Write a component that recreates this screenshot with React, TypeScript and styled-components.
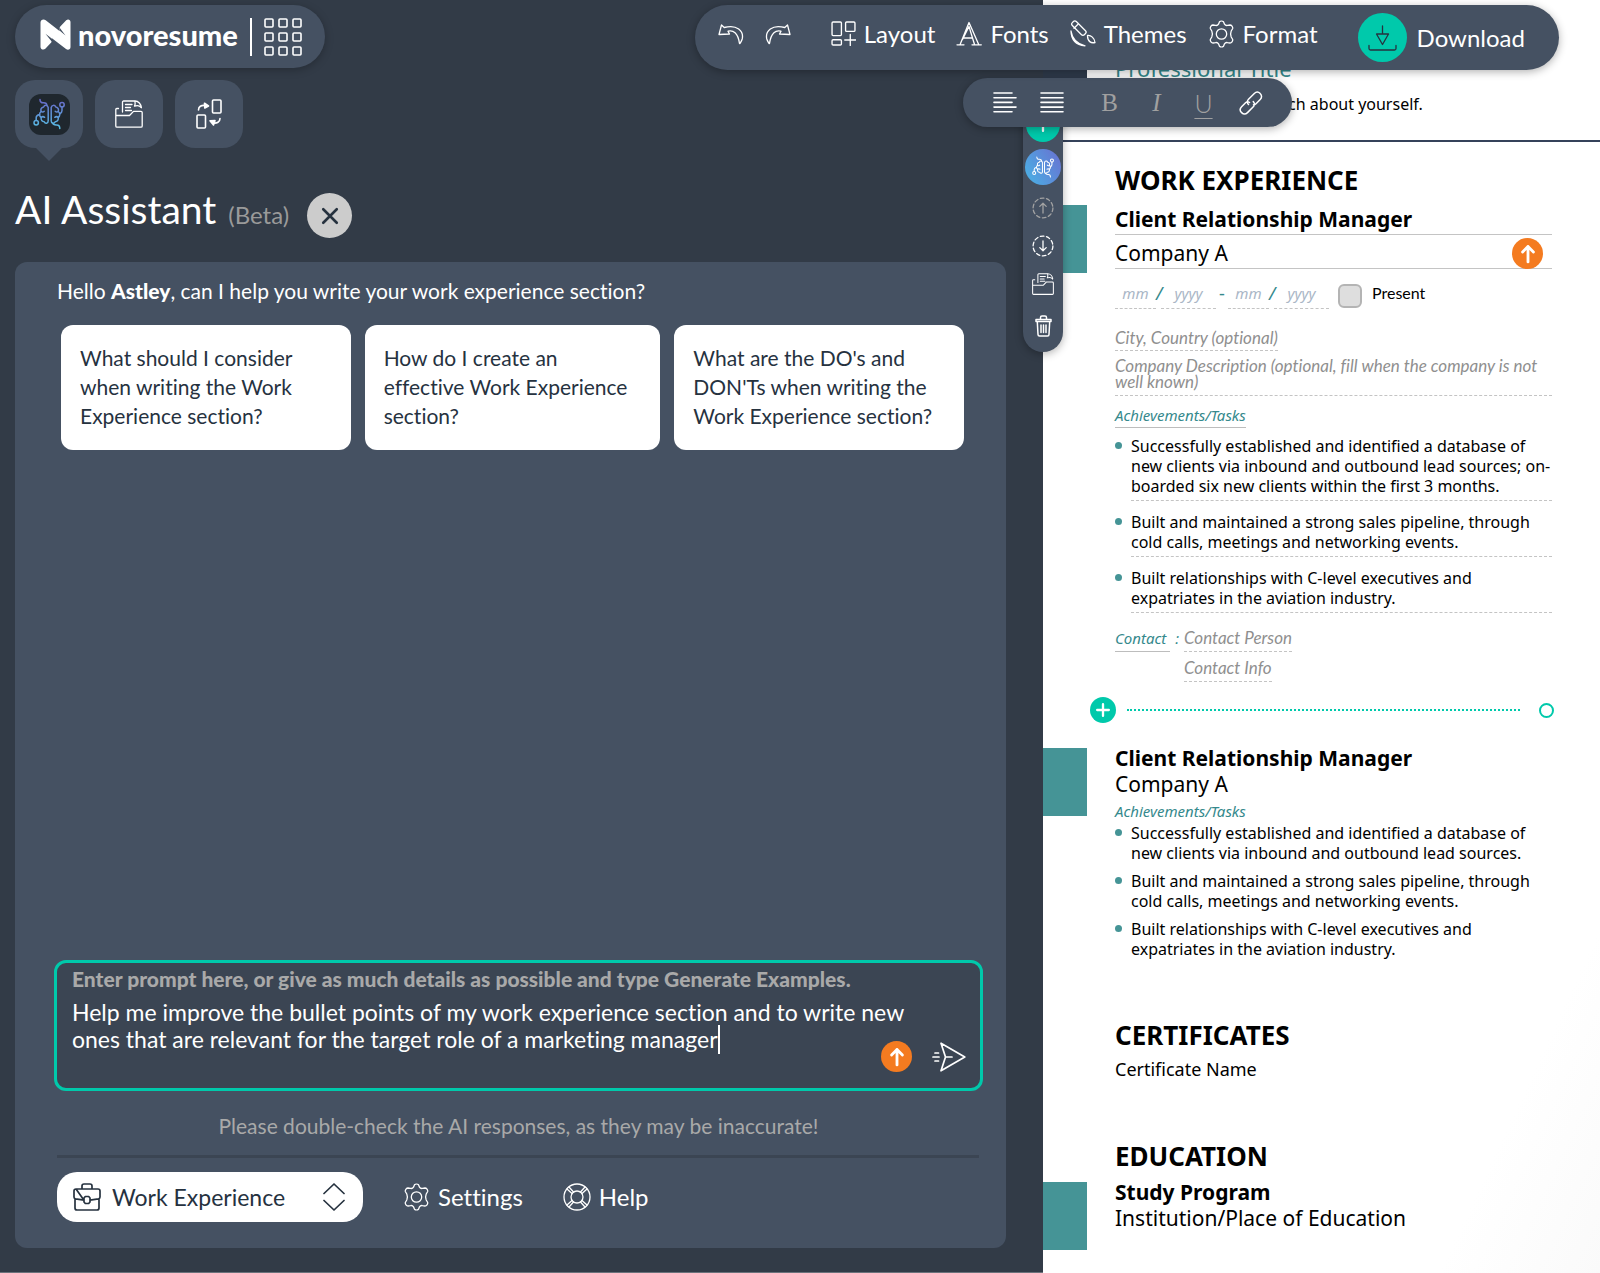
import React, { useLayoutEffect, useRef, useState } from "react";
import styled, { createGlobalStyle, css } from "styled-components";

const ui = `Lato, "Open Sans", sans-serif`;
const paper = `"Noto Sans", "Open Sans", sans-serif`;

const color = {
  ink: "#323b47",
  slate: "#455162",
  well: "#3b4553",
  mint: "#00c9ab",
  teal: "#459496",
  tealText: "#35898c",
  orange: "#f47b20",
  muted: "#a9a9a9",
  navy: "#26323f",
};

const GlobalStyle = createGlobalStyle`
  * { box-sizing: border-box; }
  body {
    margin: 0;
    background: ${color.ink};
    font-family: ${ui};
    font-variant-ligatures: none;
  }
  button, input, select, textarea { font: inherit; color: inherit; margin: 0; }
  h1, h2, h3, p, ul { margin: 0; padding: 0; }
  svg { display: block; flex: none; }
`;

/* ---------- shell ---------- */

const Shell = styled.div`
  position: relative;
  display: grid;
  grid-template-columns: minmax(0, 1043fr) minmax(0, 557fr);
  min-height: 100vh;
  overflow: hidden;
`;

const Workspace = styled.main`
  display: flex;
  flex-direction: column;
  align-items: stretch;
  padding: 5px 37px 24px 15px;
  background: ${color.ink};
  border-bottom: 1px solid #6b727b;
`;

const iconButton = css`
  display: flex;
  align-items: center;
  justify-content: center;
  padding: 0;
  border: 0;
  background: none;
  cursor: pointer;
`;

const BrandPill = styled.header`
  display: flex;
  align-items: center;
  align-self: flex-start;
  height: 63px;
  padding: 0 23px 0 25px;
  border-radius: 32px;
  background: ${color.slate};
  color: #fff;
  box-shadow: 0 2px 8px rgba(0, 0, 0, 0.25);
`;

const BrandLink = styled.a`
  display: flex;
  align-items: center;
  gap: 7px;
  padding-bottom: 4px;
  color: #fff;
  font-size: 29px;
  font-weight: 900;
  line-height: 32px;
  text-decoration: none;
`;

const BrandDivider = styled.span`
  width: 2px;
  height: 38px;
  margin: 0 12px;
  background: #fff;
`;

const PlainIconButton = styled.button`
  ${iconButton}
  color: #fff;
`;

const Tabs = styled.nav`
  display: flex;
  gap: 12px;
  margin-top: 12px;
`;

const Tab = styled.button<{ $active?: boolean }>`
  ${iconButton}
  position: relative;
  width: 68px;
  height: 68px;
  border-radius: 20px;
  background: ${color.slate};
  color: #fff;
  ${(p) =>
    p.$active &&
    css`
      &::after {
        content: "";
        position: absolute;
        top: 100%;
        left: 50%;
        margin-left: -13px;
        border: 13px solid transparent;
        border-top-color: ${color.slate};
        border-bottom-width: 0;
      }
    `}
`;

const AiTile = styled.span`
  display: flex;
  align-items: center;
  justify-content: center;
  width: 41px;
  height: 41px;
  border-radius: 12px;
  background: #1f272e;
`;

const TitleRow = styled.div`
  display: flex;
  gap: 18px;
  margin-top: 45px;
`;

const Title = styled.h1`
  color: #fff;
  font-size: 39px;
  font-weight: 400;
  line-height: 32px;
  white-space: nowrap;
`;

const Beta = styled.small`
  margin-left: 12px;
  color: #9a9a9a;
  font-size: 24px;
`;

const CloseButton = styled.button`
  ${iconButton}
  width: 45px;
  height: 45px;
  border-radius: 50%;
  background: #ccc;
  color: ${color.navy};
`;

/* ---------- assistant panel ---------- */

const Panel = styled.section`
  display: flex;
  flex: 1;
  flex-direction: column;
  margin-top: 24px;
  padding: 17px 23px 26px 39px;
  border-radius: 12px;
  background: ${color.slate};
`;

const Greeting = styled.p`
  padding-left: 3px;
  color: #fff;
  font-size: 21px;
  line-height: 24px;
  b { font-weight: 900; }
`;

const Suggestions = styled.div`
  display: grid;
  grid-template-columns: 289fr 295fr 289fr;
  gap: 14px;
  margin: 22px 19px auto 7px;
`;

const Suggestion = styled.button`
  display: flex;
  align-items: flex-start;
  padding: 18px 24px 20px 19px;
  border: 0;
  border-radius: 12px;
  background: #fff;
  color: ${color.navy};
  font-size: 21px;
  line-height: 29px;
  text-align: left;
  cursor: pointer;
`;

const Prompt = styled.form`
  position: relative;
  padding: 4px 15px 8px;
  border: 3px solid ${color.mint};
  border-radius: 12px;
  background: ${color.well};
`;

const PromptLabel = styled.label`
  display: block;
  color: ${color.muted};
  font-size: 21px;
  font-weight: 900;
  line-height: 24px;
`;

const PromptField = styled.textarea`
  display: block;
  width: 100%;
  height: 81px;
  margin-top: 8px;
  padding: 0 20px 0 0;
  border: 0;
  outline: 0;
  background: none;
  color: #fff;
  font-size: 23px;
  line-height: 27px;
  resize: none;
  overflow: hidden;
`;

const Caret = styled.span`
  position: absolute;
  top: 62px;
  width: 2px;
  height: 29px;
  background: #fff;
  pointer-events: none;
`;

const PromptActions = styled.div`
  position: absolute;
  right: 14px;
  bottom: 16px;
  display: flex;
  align-items: center;
  gap: 20px;
  color: #fff;
`;

const UpBadge = styled.span`
  display: flex;
  align-items: center;
  justify-content: center;
  width: 31px;
  height: 31px;
  border-radius: 50%;
  background: ${color.orange};
  color: #fff;
`;

const Notice = styled.p`
  margin-top: 23px;
  color: ${color.muted};
  font-size: 21px;
  line-height: 24px;
  text-align: center;
`;

const Rule = styled.hr`
  width: calc(100% - 7px);
  height: 3px;
  margin: 17px 0 14px 3px;
  border: 0;
  background: ${color.well};
`;

const PanelFooter = styled.div`
  display: flex;
  align-items: center;
  gap: 40px;
  padding-left: 3px;
  color: #fff;
`;

const SelectWrap = styled.label`
  display: grid;
  align-items: center;
  width: 306px;
  height: 50px;
  border-radius: 20px;
  background: #fff;
  color: ${color.navy};
  > * { grid-area: 1 / 1; }
  > svg { pointer-events: none; }
  > svg:first-of-type { margin-left: 16px; }
  > svg:last-of-type { margin-right: 18px; justify-self: end; }
`;

const SectionSelect = styled.select`
  width: 100%;
  height: 100%;
  padding: 0 52px 0 55px;
  border: 0;
  outline: 0;
  appearance: none;
  border-radius: 20px;
  background: none;
  font-size: 23px;
`;

const TextButton = styled.button`
  display: flex;
  align-items: center;
  gap: 8px;
  padding: 0;
  border: 0;
  background: none;
  color: #fff;
  font-size: 24px;
  line-height: 30px;
  cursor: pointer;
`;

/* ---------- floating bars ---------- */

const floating = css`
  position: absolute;
  display: flex;
  align-items: center;
  background: ${color.slate};
  color: #fff;
  box-shadow: 0 2px 8px rgba(0, 0, 0, 0.3);
`;

const Toolbar = styled.div`
  ${floating}
  z-index: 3;
  top: 5px;
  right: 41px;
  height: 65px;
  padding: 0 34px 0 23px;
  border-radius: 33px;
`;

const ToolGroup = styled.div<{ $gap: number }>`
  display: flex;
  align-items: center;
  gap: ${(p) => p.$gap}px;
  margin-right: 40px;
  padding-bottom: 8px;
`;

const DownloadButton = styled(TextButton)`
  gap: 10px;
`;

const DownloadDisc = styled.span`
  display: flex;
  align-items: center;
  justify-content: center;
  width: 49px;
  height: 49px;
  border-radius: 50%;
  background: ${color.mint};
  color: ${color.navy};
`;

const FormatBar = styled.div`
  ${floating}
  z-index: 2;
  top: 78px;
  right: 308px;
  height: 49px;
  padding: 0 18px;
  border-radius: 25px;
`;

const FormatButton = styled.button<{ $face?: "b" | "i" | "u" }>`
  ${iconButton}
  width: 47px;
  height: 49px;
  color: ${(p) => (p.$face ? "#a0a0a0" : "#fff")};
  font-family: ${(p) => (p.$face === "u" ? ui : `"Liberation Serif", serif`)};
  font-size: 25px;
  font-weight: ${(p) => (p.$face === "u" ? 300 : 400)};
  font-style: ${(p) => (p.$face === "i" ? "italic" : "normal")};
  text-decoration: ${(p) => (p.$face === "u" ? "underline 1px" : "none")};
  text-underline-offset: 5px;
`;

const FormatSpacer = styled.span`
  width: 11px;
`;

const Rail = styled.div`
  ${floating}
  z-index: 1;
  top: 100px;
  left: 0;
  flex-direction: column;
  width: 40px;
  height: 252px;
  margin-left: -20px;
  padding-top: 8px;
  border-radius: 0 0 20px 20px;
`;

const RailButton = styled.button<{ $size: number; $fill?: string; $dim?: boolean }>`
  ${iconButton}
  flex: none;
  width: ${(p) => p.$size}px;
  height: ${(p) => p.$size}px;
  margin-bottom: ${(p) => (p.$fill ? 7 : 6)}px;
  border-radius: 50%;
  background: ${(p) => p.$fill || "none"};
  color: ${(p) => (p.$dim ? "#a3a3a3" : "#fff")};
`;

/* ---------- resume paper ---------- */

const Paper = styled.article`
  position: relative;
  background: linear-gradient(115deg, #fff 86%, #fafafa 100%);
  color: #000;
  font-family: ${paper};
  font-size: 16px;
  line-height: 20px;
`;

const PaperHeader = styled.div`
  display: flex;
  gap: 28px;
  height: 142px;
  padding-top: 6px;
  border-bottom: 2px solid #35425a;
`;

const PhotoEdge = styled.div`
  width: 44px;
  height: 110px;
  background: #2f3b4c;
`;

const HeaderText = styled.div`
  padding-top: 48px;
`;

const ProfessionalTitle = styled.p`
  color: ${color.tealText};
  font-size: 22px;
  line-height: 28px;
`;

const Pitch = styled.p`
  margin-top: 12px;
`;

const PaperSection = styled.section<{ $top: number }>`
  padding-top: ${(p) => p.$top}px;
`;

const SectionTitle = styled.h2`
  padding-left: 72px;
  font-size: 26px;
  font-weight: 700;
  line-height: 32px;
`;

const Entry = styled.div<{ $top: number }>`
  display: grid;
  grid-template-columns: 44px minmax(0, 1fr);
  column-gap: 28px;
  margin-top: ${(p) => p.$top}px;
  padding-right: 48px;
  &::before {
    content: "";
    height: 68px;
    background: ${color.teal};
  }
`;

const EntryTitle = styled.h3`
  margin-top: -2px;
  font-size: 21px;
  font-weight: 700;
  line-height: 24px;
`;

const EntryOrg = styled.p`
  margin: 1px 0 4px;
  font-size: 21px;
  line-height: 26px;
`;

const LineField = styled.input<{ $bold?: boolean }>`
  display: block;
  width: 100%;
  height: 30px;
  padding: 0 0 2px;
  border: 0;
  border-bottom: 1px solid #c4c4c4;
  outline: 0;
  background: none;
  font-size: 21px;
  font-weight: ${(p) => (p.$bold ? 700 : 400)};
`;

const OrgRow = styled.div`
  position: relative;
  margin-top: 4px;
  ${UpBadge} {
    position: absolute;
    right: 9px;
    top: -1px;
  }
`;

const Dates = styled.div`
  display: flex;
  align-items: flex-end;
  height: 25px;
  margin: 15px 0 20px;
  color: ${color.tealText};
`;

const dashed = css`
  border: 0;
  border-bottom: 1px dashed #c4c4c4;
  outline: 0;
  background: none;
`;

const DateField = styled.input<{ $year?: boolean }>`
  ${dashed}
  width: ${(p) => (p.$year ? 55 : 41)}px;
  height: 25px;
  padding: 0 0 6px;
  font-size: 15px;
  font-style: italic;
  text-align: center;
  &::placeholder { color: #a9b6c6; opacity: 1; }
`;

const DateMark = styled.span<{ $wide?: boolean }>`
  width: ${(p) => (p.$wide ? 12 : 5)}px;
  margin-bottom: 6px;
  font-size: 18px;
  font-style: ${(p) => (p.$wide ? "normal" : "italic")};
  text-align: center;
`;

const PresentLabel = styled.label`
  display: flex;
  align-items: flex-start;
  gap: 10px;
  margin: 0 0 1px 9px;
  color: #000;
  font-family: ${ui};
  font-size: 16px;
  line-height: 18px;
`;

const PresentBox = styled.input`
  width: 24px;
  height: 24px;
  appearance: none;
  border: 2px solid #b4b4b4;
  border-radius: 6px;
  background: #dedede;
`;

const hint = css`
  ${dashed}
  display: block;
  padding: 0 0 5px;
  font-family: ${ui};
  font-size: 17px;
  font-style: italic;
  line-height: 16px;
  &::placeholder { color: #8f8f8f; opacity: 1; }
`;

const HintField = styled.input`
  ${hint}
  height: 22px;
  field-sizing: content;
`;

const HintArea = styled.textarea`
  ${hint}
  width: 100%;
  height: 38px;
  margin: 7px 0 9px;
  resize: none;
  overflow: hidden;
`;

const Caption = styled.p<{ $lined?: boolean }>`
  width: fit-content;
  color: ${color.tealText};
  font-size: 15px;
  font-style: italic;
  line-height: 20px;
  ${(p) => p.$lined && `padding-bottom: 2px; border-bottom: 1px solid #bdbdbd;`}
`;

const Tasks = styled.ul<{ $editing?: boolean }>`
  display: grid;
  gap: ${(p) => (p.$editing ? 11 : 8)}px;
  margin-top: ${(p) => (p.$editing ? 8 : 2)}px;
  list-style: none;
  li {
    position: relative;
    margin-left: 16px;
    ${(p) => p.$editing && `padding-bottom: 4px; border-bottom: 1px dashed #c4c4c4;`}
  }
  li::before {
    content: "";
    position: absolute;
    top: 6px;
    left: -16px;
    width: 7px;
    height: 7px;
    border-radius: 50%;
    background: ${color.teal};
  }
`;

const Contact = styled.div`
  display: grid;
  grid-template-columns: auto auto 1fr;
  column-gap: 5px;
  row-gap: 6px;
  margin-top: 15px;
  ${HintField} { height: 24px; grid-column: 3; justify-self: start; }
`;

const AddRow = styled.div`
  display: flex;
  align-items: center;
  gap: 11px;
  margin-top: 15px;
  padding: 0 46px 0 47px;
`;

const AddButton = styled.button`
  ${iconButton}
  width: 26px;
  height: 26px;
  border-radius: 50%;
  background: ${color.mint};
  color: #fff;
`;

const DottedLine = styled.span`
  flex: 1;
  border-top: 2px dotted ${color.mint};
`;

const Ring = styled.span`
  width: 15px;
  height: 15px;
  margin-left: 8px;
  border: 2px solid ${color.mint};
  border-radius: 50%;
`;

const Plain = styled.p`
  margin-top: 8px;
  padding-left: 72px;
  font-size: 18px;
`;

/* ---------- icons ---------- */

type IconProps = { w: number; h?: number; box?: string; sw?: number; children: React.ReactNode };

const Icon = ({ w, h = w, box = "0 0 24 24", sw = 1.4, children }: IconProps) => (
  <svg
    width={w}
    height={h}
    viewBox={box}
    fill="none"
    stroke="currentColor"
    strokeWidth={sw}
    strokeLinecap="round"
    strokeLinejoin="round"
    aria-hidden="true"
  >
    {children}
  </svg>
);

const Brain = ({ size, gradient }: { size: number; gradient?: boolean }) => (
  <svg width={size} height={size} viewBox="0 0 32 32" fill="none" aria-hidden="true">
    <defs>
      <linearGradient id="brainTone" x1="0" y1="0" x2="0" y2="32" gradientUnits="userSpaceOnUse">
        <stop offset="0" stopColor="#6a63c8" />
        <stop offset="1" stopColor="#56c4e6" />
      </linearGradient>
    </defs>
    <g
      stroke={gradient ? "url(#brainTone)" : "#fff"}
      strokeWidth="1.5"
      strokeLinecap="round"
      strokeLinejoin="round"
    >
      <path d="M7 1.500C7 4 8.500 5 10.500 4.800C12.800 4.700 13.800 5.500 14 7.500" />
      <path d="M15.200 9.500C14.600 6.800 11.600 6.700 10.600 9C8.200 9.300 7.300 11.500 8.200 13.500C6 15 6 18 8.200 19.300C7.600 22 9.200 23.700 11.200 23.700C12.200 26 15.200 25.600 15.200 22.800Z" />
      <path d="M8.200 13.500C9.200 14.300 10.300 14.200 11.200 13.300M8.200 19.300C9.400 18.400 10.600 18.500 11.600 19.300" />
      <path d="M3.200 22.400V19.500C3.200 17.600 4.600 17 6.600 16.500" />
      <circle cx="3.200" cy="24.700" r="2.200" />
      <path d="M18.200 9.500C18.800 6.800 21.800 6.700 22.800 9C25.200 9.300 26 11.500 25.200 13.500C27.300 15 27.300 18 25.200 19.300C25.800 22 24.200 23.700 22.200 23.700C21.200 26 18.200 25.600 18.200 22.800Z" />
      <path d="M25.200 13.500C24.200 14.300 23.100 14.200 22.200 13.300M25.200 19.300C24 18.400 22.800 18.500 21.800 19.300" />
      <path d="M29 9V12.500C29 14.500 28 15.300 26.700 15.800" />
      <circle cx="29" cy="6.700" r="2.200" />
      <path d="M19.600 25C20.200 27.200 22 26.900 23.800 26.900C26 26.900 26.800 28.300 26.800 30.500" />
    </g>
  </svg>
);

const Logo = () => (
  <svg width="31" height="31" viewBox="0 0 31 31" aria-hidden="true">
    <path
      fill="#fff"
      d="M.5 3.500C.5 .8 3.600 -.4 5.700 1.300L19.500 12V9.500C19.500 8.700 19.700 8.200 20.300 7.500L26.200 1.200C28 -.5 30.500 .6 30.500 3V28C30.500 30.500 28 31.600 26 30L12 19.300V21.500C12 22.300 11.700 22.900 11.200 23.500L5.300 29.800C3.600 31.500 .5 30.400 .5 28Z"
    />
    <path d="M12 19.800V23L5.500 14.800ZM19.500 11.500V8.500L25.500 16.400Z" fill="#455162" />
  </svg>
);

const AppGrid = () => (
  <svg width="38" height="38" viewBox="0 0 38 38" fill="none" stroke="#fff" strokeWidth="1.6" aria-hidden="true">
    {[0, 14, 28].map((y) =>
      [0, 14, 28].map((x) => (
        <rect key={`${x}-${y}`} x={x + 1} y={y + 1} width="8" height="8" rx="1" />
      ))
    )}
  </svg>
);

const Folder = ({ size }: { size: number }) => (
  <Icon w={size} box="0 0 28 28" sw={1.3}>
    <path d="M3.500 8.500H1.800C1.200 8.500 .8 9 .8 9.600V26C.8 26.700 1.300 27.200 2 27.200H26C26.700 27.200 27.200 26.700 27.200 26V12.600C27.200 11.900 26.700 11.400 26 11.400H18.500L14.500 15.500H.8" />
    <path d="M7.500 12V2.200C7.500 1.600 8 1 8.600 1H20C23.500 1 26 4 26.300 7.500" />
    <path d="M10.500 4.500H17M10.500 7.500H15.500M10.500 10.500H16.500M20 1.500C20.500 4 20 5 19.500 6.200C22 5.200 24.500 5.500 26.300 7.500" />
  </Icon>
);

const Swap = () => (
  <Icon w={26} h={30} box="0 0 26 30" sw={1.6}>
    <rect x="16.500" y="1" width="8.500" height="13" rx="1" />
    <rect x="1" y="16" width="8.500" height="13" rx="1" />
    <path d="M2.500 11C2.500 7.500 5 6 9.500 6.500" />
    <path d="M8.500 4.200L12.500 7L8.800 9Z" fill="currentColor" />
    <path d="M24 19.500C24 23 21 24.600 17 24" />
    <path d="M14 21.800L19 21.500L17.500 26Z" fill="currentColor" />
  </Icon>
);

const Undo = () => (
  <Icon w={26} h={22} box="0 0 26 22" sw={1.3}>
    <path d="M3.500 2L1 11.500L11.500 11L10 8.200C15 6.800 20 9.500 21.500 20.500C22 20.800 23.500 18 24.200 16C26 8 19 1 6.200 4.500Z" />
  </Icon>
);

const Redo = () => (
  <Icon w={26} h={22} box="0 0 26 22" sw={1.3}>
    <path d="M22.500 2L25 11.500L14.500 11L16 8.200C11 6.800 6 9.500 4.500 20.500C4 20.800 2.500 18 1.800 16C0 8 7 1 19.800 4.500Z" />
  </Icon>
);

const LayoutIcon = () => (
  <Icon w={25} sw={1.3}>
    <rect x="1" y="1" width="9" height="13" rx="1" />
    <rect x="14" y="1" width="9" height="9" rx="1" />
    <rect x="1" y="18" width="9" height="5" rx="1" />
    <path d="M18.500 13V23.500M13.200 18.200H23.700" />
  </Icon>
);

const FontsIcon = () => (
  <Icon w={26} h={25} box="0 0 26 25" sw={1.3}>
    <path d="M1 23.800H8M16 23.800H25.300M4 23.800L13 1.500L22.800 23.800M6.500 18.500L13 5.500L18.600 23.800M7 17H16.200" />
  </Icon>
);

const ThemesIcon = () => (
  <Icon w={26} h={27} box="0 0 26 27" sw={1.3}>
    <rect x="-2.800" y="-9.500" width="5.600" height="17" rx="2" transform="translate(9.600 8.800) rotate(-45)" />
    <path d="M4 8.200L8 4.200" />
    <path d="M17.500 15.500C21 15 24.500 18 25 22.500C21 23.500 17.500 21.500 17.500 15.500Z" />
    <path d="M1 11C2 18 6.500 23.500 15 25.800C6 25 1.200 19.500 1 11Z" fill="currentColor" />
  </Icon>
);

const Gear = () => (
  <Icon w={27} h={28} box="0 0 27 28" sw={1.3}>
    <circle cx="13.500" cy="14" r="5.200" />
    <path d="M11.500 1.800C12.500 .8 14.500 .8 15.500 1.800L16.500 4.200C17.200 5.300 18.200 5.700 19.500 5.400L22 5C23.500 5 25 7 24.700 8.500L23.200 11C22.600 12.500 22.600 15.500 23.200 17L24.700 19.500C25 21 23.500 23 22 23L19.500 22.600C18.200 22.300 17.200 22.700 16.500 23.800L15.500 26.200C14.500 27.200 12.500 27.200 11.500 26.200L10.500 23.800C9.800 22.700 8.800 22.300 7.500 22.600L5 23C3.500 23 2 21 2.300 19.500L3.800 17C4.400 15.500 4.400 12.500 3.800 11L2.300 8.500C2 7 3.500 5 5 5L7.500 5.400C8.800 5.700 9.800 5.300 10.500 4.200Z" />
  </Icon>
);

const DownloadIcon = () => (
  <Icon w={29} h={26} box="0 0 29 26" sw={1.3}>
    <path d="M14.500 1V9M8.500 9H20.500L14.500 19.500ZM1 20.500V23.500C1 24.500 1.500 25 2.500 25H26.500C27.500 25 28 24.500 28 23.500V20.500" />
  </Icon>
);

const AlignLeft = () => (
  <Icon w={24} h={21} box="0 0 24 21" sw={1.6}>
    <path d="M1 1H19M1 5.700H23M1 10.400H19M1 15.100H23M1 19.800H19" />
  </Icon>
);

const AlignJustify = () => (
  <Icon w={24} h={21} box="0 0 24 21" sw={1.6}>
    <path d="M1 1H23M1 5.700H23M1 10.400H23M1 15.100H23M1 19.800H23" />
  </Icon>
);

const LinkIcon = () => (
  <Icon w={24} sw={1.500}>
    <path d="M9.500 13.500C8 12 8 9.800 9.500 8.300L15.300 2.500C17 .8 19.500 .8 21.200 2.500C23 4.200 23 6.800 21.200 8.500L17 12.700C16.500 13.200 15.500 13.700 14.500 13.700M10.500 11.500C9 10.300 7.800 10.700 6.800 11.500L2.600 15.700C.9 17.400 .9 19.900 2.600 21.600C4.300 23.300 6.800 23.300 8.500 21.600L14.300 15.800C15.800 14.300 15.700 12 14.300 10.600" />
  </Icon>
);

const Arrow = ({ size, sw = 3.4 }: { size: number; sw?: number }) => (
  <Icon w={size} sw={sw}>
    <path d="M12 21.500V3M5.500 9.500L12 3L18.500 9.500" />
  </Icon>
);

const CircleArrow = ({ down }: { down?: boolean }) => (
  <Icon w={22} sw={1.4}>
    <circle cx="12" cy="12" r="10.800" strokeDasharray="4 2.800" />
    <path d={down ? "M12 6.500V17M8.500 13.800L12 17.200L15.500 13.800" : "M12 17.500V7M8.500 10.200L12 6.800L15.500 10.200"} />
  </Icon>
);

const Trash = () => (
  <Icon w={17} h={22} box="0 0 17 22" sw={1.500}>
    <path d="M1 4.500H16V6.500H1ZM5.500 4.300V2.500C5.500 1.500 6 1 7 1H10C11 1 11.500 1.500 11.500 2.500V4.300M2.300 6.700L3 19.500C3 20.500 3.500 21 4.500 21H12.500C13.500 21 14 20.500 14 19.500L14.700 6.700M6 10V17.500M8.500 10V17.500M11 10V17.500" />
  </Icon>
);

const Plus = ({ size }: { size: number }) => (
  <Icon w={size} sw={4}>
    <path d="M12 2V22M2 12H22" />
  </Icon>
);

const Send = () => (
  <Icon w={34} h={30} box="0 0 34 30" sw={1.700}>
    <path d="M9 1.200L32.800 15L9 28.800L13.500 15ZM13.500 15H20M1 15H7M3 11H6.500M3 19H6.500" />
  </Icon>
);

const Briefcase = () => (
  <Icon w={28} h={28} box="0 0 28 28" sw={1.700}>
    <path d="M9 6V3C9 1.700 9.700 1 11 1H17C18.300 1 19 1.700 19 3V6M3 6H25C26.300 6 27 6.700 27 8V14C27 15 26.500 15.600 25.500 15.900L17 17.200M11 17.200L2.500 15.900C1.500 15.600 1 15 1 14V8C1 6.700 1.700 6 3 6ZM2 16V25C2 26.300 2.700 27 4 27H24C25.300 27 26 26.300 26 25V16M12.300 13.500H15.700L17 15V19L15.700 20.500H12.300L11 19V15Z" />
  </Icon>
);

const Chevrons = () => (
  <Icon w={22} h={28} box="0 0 22 28" sw={1.700}>
    <path d="M1 10.500L11 1L21 10.500M1 17.500L11 27L21 17.500" />
  </Icon>
);

const Lifebuoy = () => (
  <Icon w={28} box="0 0 28 28" sw={1.3}>
    <circle cx="14" cy="14" r="13" />
    <circle cx="14" cy="14" r="6" />
    <path d="M4 6L9 10.500M6 4L10.500 9M22 4L17.500 9M24 6L19 10.500M4 22L9 17.500M6 24L10.500 19M22 24L17.500 19M24 22L19 17.500" />
  </Icon>
);

/* ---------- data ---------- */

const questions = [
  "What should I consider when writing the Work Experience section?",
  "How do I create an effective Work Experience section?",
  "What are the DO's and DON'Ts when writing the Work Experience section?",
];

const lastLine = "ones that are relevant for the target role of a marketing manager";
const draft = `Help me improve the bullet points of my work experience section and to write new ${lastLine}`;

const sharedTasks = [
  "Built and maintained a strong sales pipeline, through cold calls, meetings and networking events.",
  "Built relationships with C-level executives and expatriates in the aviation industry.",
];

/* ---------- parts ---------- */

function PromptBox() {
  const field = useRef<HTMLTextAreaElement>(null);
  const [text, setText] = useState(draft);
  const [caretX, setCaretX] = useState(0);

  // The caret sits after the last line, so that line's width is taken from a throwaway span.
  useLayoutEffect(() => {
    const area = field.current;
    if (!area) return;
    const probe = document.createElement("span");
    probe.textContent = lastLine;
    probe.style.position = "absolute";
    probe.style.whiteSpace = "nowrap";
    probe.style.fontSize = getComputedStyle(area).fontSize;
    document.body.appendChild(probe);
    setCaretX(area.offsetLeft + Math.round(probe.getBoundingClientRect().width));
    probe.remove();
  }, []);

  return (
    <Prompt onSubmit={(e) => e.preventDefault()}>
      <PromptLabel htmlFor="prompt">
        Enter prompt here, or give as much details as possible and type Generate Examples.
      </PromptLabel>
      <PromptField
        id="prompt"
        ref={field}
        spellCheck={false}
        value={text}
        onChange={(e) => setText(e.target.value)}
      />
      {text === draft && <Caret style={{ left: caretX }} />}
      <PromptActions>
        <UpBadge><Arrow size={20} /></UpBadge>
        <PlainIconButton type="submit" aria-label="Send"><Send /></PlainIconButton>
      </PromptActions>
    </Prompt>
  );
}

function Assistant() {
  return (
    <Panel>
      <Greeting>
        Hello <b>Astley</b>, can I help you write your work experience section?
      </Greeting>
      <Suggestions>
        {questions.map((q) => (
          <Suggestion key={q} type="button">{q}</Suggestion>
        ))}
      </Suggestions>
      <PromptBox />
      <Notice>Please double-check the AI responses, as they may be inaccurate!</Notice>
      <Rule />
      <PanelFooter>
        <SelectWrap>
          <Briefcase />
          <SectionSelect aria-label="Section" defaultValue="work">
            <option value="work">Work Experience</option>
          </SectionSelect>
          <Chevrons />
        </SelectWrap>
        <TextButton type="button"><Gear />Settings</TextButton>
        <TextButton type="button"><Lifebuoy />Help</TextButton>
      </PanelFooter>
    </Panel>
  );
}

function TopBar() {
  return (
    <Toolbar role="toolbar">
      <ToolGroup $gap={21}>
        <PlainIconButton aria-label="Undo"><Undo /></PlainIconButton>
        <PlainIconButton aria-label="Redo"><Redo /></PlainIconButton>
      </ToolGroup>
      <ToolGroup $gap={21}>
        <TextButton><LayoutIcon />Layout</TextButton>
        <TextButton><FontsIcon />Fonts</TextButton>
        <TextButton><ThemesIcon />Themes</TextButton>
        <TextButton><Gear />Format</TextButton>
      </ToolGroup>
      <DownloadButton>
        <DownloadDisc><DownloadIcon /></DownloadDisc>
        Download
      </DownloadButton>
    </Toolbar>
  );
}

function TextBar() {
  return (
    <FormatBar role="toolbar">
      <FormatButton aria-label="Align left"><AlignLeft /></FormatButton>
      <FormatButton aria-label="Justify"><AlignJustify /></FormatButton>
      <FormatSpacer />
      <FormatButton $face="b">B</FormatButton>
      <FormatButton $face="i">I</FormatButton>
      <FormatButton $face="u">U</FormatButton>
      <FormatButton aria-label="Link"><LinkIcon /></FormatButton>
    </FormatBar>
  );
}

function EntryRail() {
  return (
    <Rail>
      <RailButton $size={34} $fill={color.mint} aria-label="Add"><Plus size={14} /></RailButton>
      <RailButton $size={36} $fill="linear-gradient(60deg, #48b4e6, #6a6fd0)" aria-label="Assistant">
        <Brain size={22} />
      </RailButton>
      <RailButton $size={32} $dim aria-label="Move up"><CircleArrow /></RailButton>
      <RailButton $size={32} aria-label="Move down"><CircleArrow down /></RailButton>
      <RailButton $size={32} aria-label="Content"><Folder size={22} /></RailButton>
      <RailButton $size={40} aria-label="Delete"><Trash /></RailButton>
    </Rail>
  );
}

function EditedEntry() {
  return (
    <Entry $top={9}>
      <div>
        <LineField $bold aria-label="Position" defaultValue="Client Relationship Manager" />
        <OrgRow>
          <LineField aria-label="Company" defaultValue="Company A" />
          <UpBadge><Arrow size={20} /></UpBadge>
        </OrgRow>
        <Dates>
          <DateField aria-label="Start month" placeholder="mm" />
          <DateMark>/</DateMark>
          <DateField $year aria-label="Start year" placeholder="yyyy" />
          <DateMark $wide>-</DateMark>
          <DateField aria-label="End month" placeholder="mm" />
          <DateMark>/</DateMark>
          <DateField $year aria-label="End year" placeholder="yyyy" />
          <PresentLabel><PresentBox type="checkbox" />Present</PresentLabel>
        </Dates>
        <HintField aria-label="Place" placeholder="City, Country (optional)" />
        <HintArea
          aria-label="Company description"
          placeholder="Company Description (optional, fill when the company is not well known)"
        />
        <Caption $lined>Achievements/Tasks</Caption>
        <Tasks $editing>
          <li>
            Successfully established and identified a database of new clients via inbound and
            outbound lead sources; on-boarded six new clients within the first 3 months.
          </li>
          {sharedTasks.map((t) => <li key={t}>{t}</li>)}
        </Tasks>
        <Contact>
          <Caption $lined>Contact&nbsp;</Caption>
          <Caption>:</Caption>
          <HintField aria-label="Contact person" placeholder="Contact Person" />
          <HintField aria-label="Contact info" placeholder="Contact Info" />
        </Contact>
      </div>
    </Entry>
  );
}

function Resume() {
  return (
    <Paper>
      <EntryRail />
      <PaperHeader>
        <PhotoEdge />
        <HeaderText>
          <ProfessionalTitle>Professional Title</ProfessionalTitle>
          <Pitch>Short and engaging pitch about yourself.</Pitch>
        </HeaderText>
      </PaperHeader>

      <PaperSection $top={22}>
        <SectionTitle>WORK EXPERIENCE</SectionTitle>
        <EditedEntry />
        <AddRow>
          <AddButton aria-label="Add entry"><Plus size={14} /></AddButton>
          <DottedLine />
          <Ring />
        </AddRow>
        <Entry $top={25}>
          <div>
            <EntryTitle>Client Relationship Manager</EntryTitle>
            <EntryOrg>Company A</EntryOrg>
            <Caption>Achievements/Tasks</Caption>
            <Tasks>
              <li>
                Successfully established and identified a database of new clients via inbound and
                outbound lead sources.
              </li>
              {sharedTasks.map((t) => <li key={t}>{t}</li>)}
            </Tasks>
          </div>
        </Entry>
      </PaperSection>

      <PaperSection $top={60}>
        <SectionTitle>CERTIFICATES</SectionTitle>
        <Plain>Certificate Name</Plain>
      </PaperSection>

      <PaperSection $top={61}>
        <SectionTitle>EDUCATION</SectionTitle>
        <Entry $top={10}>
          <div>
            <EntryTitle>Study Program</EntryTitle>
            <EntryOrg>Institution/Place of Education</EntryOrg>
          </div>
        </Entry>
      </PaperSection>
    </Paper>
  );
}

export default function App() {
  return (
    <>
      <GlobalStyle />
      <Shell>
        <Workspace>
          <BrandPill>
            <BrandLink href="#"><Logo />novoresume</BrandLink>
            <BrandDivider />
            <PlainIconButton aria-label="Apps"><AppGrid /></PlainIconButton>
          </BrandPill>
          <Tabs>
            <Tab $active aria-label="AI Assistant"><AiTile><Brain size={32} gradient /></AiTile></Tab>
            <Tab aria-label="Content"><Folder size={28} /></Tab>
            <Tab aria-label="Rearrange"><Swap /></Tab>
          </Tabs>
          <TitleRow>
            <Title>AI Assistant<Beta>(Beta)</Beta></Title>
            <CloseButton aria-label="Close">
              <Icon w={18} sw={3.500}><path d="M3 3L21 21M21 3L3 21" /></Icon>
            </CloseButton>
          </TitleRow>
          <Assistant />
        </Workspace>
        <Resume />
        <TopBar />
        <TextBar />
      </Shell>
    </>
  );
}
